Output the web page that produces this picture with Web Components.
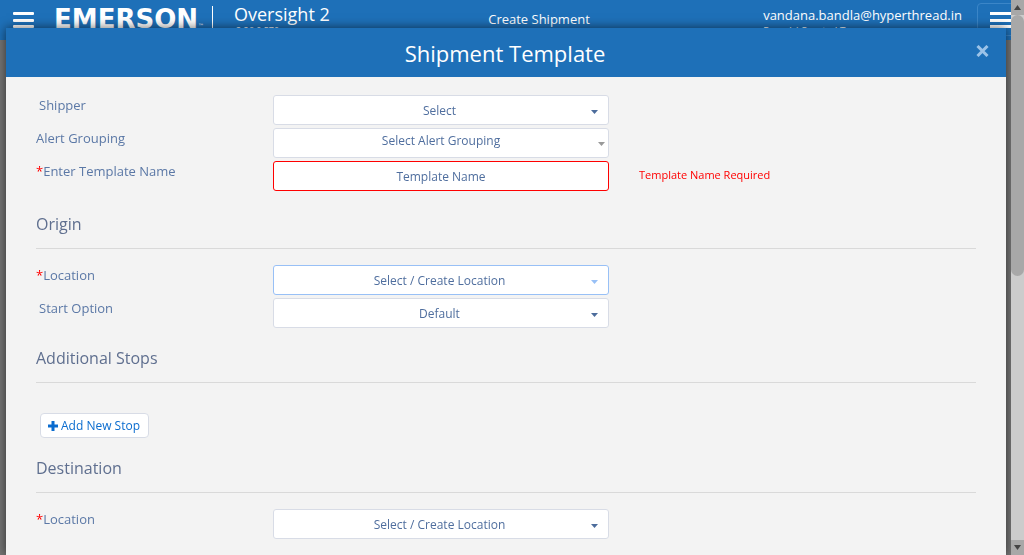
<!DOCTYPE html>
<html lang="en">
<head>
<meta charset="utf-8">
<title>Create Shipment</title>
<style>
html,body{margin:0;height:100%;overflow:hidden}
body{font-family:"Open Sans",sans-serif;font-size:13px;line-height:20px;color:#5b78a6;background:#757575}
</style>
</head>
<body>
<app-header></app-header>
<shipment-modal heading="Shipment Template">
  <field-row label="Shipper" indent kind="select" value="Select"></field-row>
  <field-row label="Alert Grouping" kind="combo" value="Select Alert Grouping"></field-row>
  <field-row label="Enter Template Name" required kind="text" value="Template Name" error="Template Name Required"></field-row>
  <form-section heading="Origin" class="first">
    <field-row label="Location" required kind="select" active value="Select / Create Location"></field-row>
    <field-row label="Start Option" indent kind="select" value="Default"></field-row>
  </form-section>
  <form-section heading="Additional Stops">
    <add-button>Add New Stop</add-button>
  </form-section>
  <form-section heading="Destination">
    <field-row label="Location" required kind="select" value="Select / Create Location"></field-row>
  </form-section>
</shipment-modal>
<scroll-rail></scroll-rail>
<script>
class Base extends HTMLElement{
  constructor(){super();this.attachShadow({mode:'open'});}
  connectedCallback(){this.shadowRoot.innerHTML=this.render();}
  attr(n){return this.getAttribute(n)||'';}
}
customElements.define('app-header',class extends Base{render(){return `
<style>
:host{display:block;height:40px;background:#1e70b8;color:#fff;overflow:hidden}
header{display:grid;grid-template-columns:1fr auto 1fr;align-items:start;height:40px}
.left,.right{display:flex;align-items:start}
.right{justify-content:flex-end}
button{border:0;background:none;padding:0;display:block}
.menu{margin:11px 20px 0 13px}
.logo{font-family:"DejaVu Sans",sans-serif;font-weight:700;font-size:26px;line-height:38px;white-space:nowrap}
.logo sup{font-size:6px;line-height:6px;font-weight:400;vertical-align:baseline}
.product{border-left:1px solid #fff;margin:6px 0 0 8px;padding-left:21px;height:30px}
.name{font-size:18px;line-height:16px}
.version{font-size:9px;line-height:12px;padding:3px 0 0 2px}
.title{padding:9px 0 0 54px}
.user{line-height:20px;padding-top:5px;margin-right:15px}
.user div{line-height:12px;font-size:10px}
.side{width:47px;height:33px;margin-top:3px;padding:8px 0 5px 12px;border:1px solid #3b86c8;border-radius:4px;box-sizing:border-box}
svg{display:block}
</style>
<header>
 <div class="left">
  <button class="menu" aria-label="Menu"><svg width="21" height="18" fill="#fff"><rect y="1" width="21" height="3" rx="1"/><rect y="8" width="21" height="3" rx="1"/><rect y="14" width="21" height="3" rx="1"/></svg></button>
  <div class="logo">EMERSON<sup>™</sup></div>
  <div class="product"><div class="name">Oversight 2</div><div class="version">2.26.0.570</div></div>
 </div>
 <div class="title">Create Shipment</div>
 <div class="right">
  <div class="user">vandana.bandla@hyperthread.in<div>Parcel / Created Team</div></div>
  <button class="side" aria-label="Options"><svg width="22" height="18" fill="#fff"><rect y="0" width="22" height="3"/><rect y="7" width="22" height="3"/><rect y="13" width="22" height="3"/></svg></button>
 </div>
</header>`}});
customElements.define('shipment-modal',class extends Base{render(){return `
<style>
:host{position:fixed;top:28px;left:6px;right:18px;bottom:0;display:flex;flex-direction:column;background:#f3f3f3;box-shadow:0 0 10px rgba(0,0,0,.6)}
header{display:grid;grid-template-columns:40px 1fr 42px;align-items:center;height:49px;flex:none;background:#1e70b8;color:#fff}
h1{grid-column:2;margin:0;font-size:22px;line-height:30px;font-weight:400;text-align:center}
button{border:0;background:none;padding:0 0 4px 12px;display:block}
svg{display:block}
main{padding:18px 30px 0;display:flex;flex-direction:column;gap:3px;overflow:hidden}
</style>
<header><h1>${this.attr('heading')}</h1>
<button aria-label="Close"><svg width="13" height="12" viewBox="0 0 13 12" stroke="#9cc3e8" stroke-width="3"><path d="M1.5 1 11.5 11M11.5 1 1.5 11"/></svg></button></header>
<main><slot></slot></main>`}});
customElements.define('form-section',class extends Base{render(){return `
<style>
:host{display:block;padding-top:15px}
:host(.first){padding-top:18px}
h2{margin:0 0 16px;padding-bottom:12px;border-bottom:1px solid #d9d9d9;font-size:16px;line-height:24px;font-weight:400;color:#5f6f8f}
div{display:flex;flex-direction:column;gap:3px;align-items:stretch}
</style><h2>${this.attr('heading')}</h2><div><slot></slot></div>`}});
customElements.define('field-row',class extends Base{render(){
 const k=this.attr('kind'),v=this.attr('value');
 return `
<style>
:host{display:grid;grid-template-columns:237fr 336fr 367fr;height:30px}
label{line-height:20px}
:host([indent]) label{padding-left:3px}
i{color:#f00;font-style:normal}
.box{position:relative;display:flex}
select,input{appearance:none;box-sizing:border-box;width:100%;height:30px;margin:0;border:1px solid #d8dce6;border-radius:3px;background:#fff;font:inherit;font-size:12px;color:#4f6e9e;text-align:center;text-align-last:center;padding:2px 3px 0 0;outline:0}
input{border-color:#f00;padding:0}
input::placeholder{color:#4f6e9e;opacity:1}
:host([active]) select{border-color:#98c0f6}
.combo select{padding:0 0 4px}
svg{position:absolute;right:11px;top:15px;fill:#4c6c9c;pointer-events:none}
:host([active]) svg{fill:#98c0f6}
.combo svg{right:4px;top:14px;fill:#999}
.error{color:#f00;font-size:11px;line-height:28px;padding-left:30px}
</style>
<label for="c">${this.hasAttribute('required')?'<i>*</i>':''}${this.attr('label')}</label>
<div class="box ${k}">${k==='text'?`<input id="c" type="text" placeholder="${v}">`:`<select id="c"><option>${v}</option></select><svg width="7" height="4"><path d="M0 0H7L3.5 4Z"/></svg>`}</div>
<span class="error">${this.attr('error')}</span>`}});
customElements.define('add-button',class extends Base{render(){return `
<style>
:host{display:block;padding:14px 4px 0}
button{display:flex;align-items:center;gap:3px;height:25px;padding:0 8px 0 7px;border:1px solid #d8dce6;border-radius:4px;background:#fff;color:#0a6ccf;font:inherit;font-size:12px}
</style><button type="button"><svg width="10" height="10" fill="currentColor"><path d="M3.5 0h3v3.5H10v3H6.500V10h-3V6.500H0v-3h3.500z"/></svg><slot></slot></button>`}});
customElements.define('scroll-rail',class extends Base{render(){return `
<style>
:host{position:fixed;top:0;right:0;bottom:0;width:13px;display:flex;flex-direction:column;background:#ccc}
.end{height:15px;flex:none;display:flex;align-items:center;justify-content:center;background:#a8a8a8}
.thumb{height:47%;border-radius:7px;background:#a8a8a8}
.last{margin-top:auto}
</style>
<div class="end"><svg width="7" height="5" fill="#444"><path d="M0 5H7L3.500 0Z"/></svg></div><div class="thumb"></div>
<div class="end last"><svg width="7" height="5" fill="#444"><path d="M0 0H7L3.500 5Z"/></svg></div>`}});
</script>
</body>
</html>
